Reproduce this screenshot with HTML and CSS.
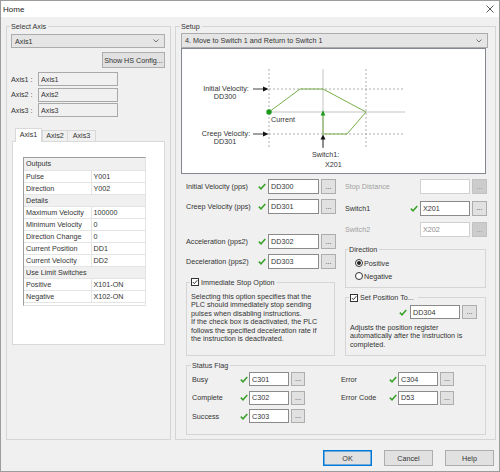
FILE: index.html
```html
<!DOCTYPE html>
<html lang="en">
<head>
    <meta charset="UTF-8">
    <title>Home</title>
    <link rel="stylesheet" href="styles.css">
</head>
<body>
<div class="window">
    <div class="titlebar">
        <span>Home</span>
        <svg class="close" viewBox="0 0 8 8"><path d="M0.5 0.5 L7.5 7.5 M7.5 0.5 L0.5 7.5"/></svg>
    </div>

    <div class="content">
        <div class="groups">
            <!-- left: axis selection -->
            <fieldset class="group axis-group">
                <legend>Select Axis</legend>
                <div class="combo"><span>Axis1</span><svg class="chev" viewBox="0 0 6 4"><path d="M0.5 0.5 L3 3 L5.5 0.5"/></svg></div>
                <button class="btn hs-btn">Show HS Config...</button>
                <div class="axis-list">
                    <div class="axis-row"><span class="axis-lbl">Axis1 :</span><input class="tb ro" value="Axis1" readonly></div>
                    <div class="axis-row"><span class="axis-lbl">Axis2 :</span><input class="tb ro" value="Axis2" readonly></div>
                    <div class="axis-row"><span class="axis-lbl">Axis3 :</span><input class="tb ro" value="Axis3" readonly></div>
                </div>
                <div class="tabs">
                    <span class="tab active">Axis1</span>
                    <span class="tab t2">Axis2</span>
                    <span class="tab t3">Axis3</span>
                </div>
                <div class="tab-page">
                    <div class="grid">
                        <table>
                            <tr class="section"><td colspan="2">Outputs</td></tr>
                            <tr><td class="key">Pulse</td><td>Y001</td></tr>
                            <tr><td class="key">Direction</td><td>Y002</td></tr>
                            <tr class="section"><td colspan="2">Details</td></tr>
                            <tr><td class="key">Maximum Velocity</td><td>100000</td></tr>
                            <tr><td class="key">Minimum Velocity</td><td>0</td></tr>
                            <tr><td class="key">Direction Change</td><td>0</td></tr>
                            <tr><td class="key">Current Position</td><td>DD1</td></tr>
                            <tr><td class="key">Current Velocity</td><td>DD2</td></tr>
                            <tr class="section"><td colspan="2">Use Limit Switches</td></tr>
                            <tr><td class="key">Positive</td><td>X101-ON</td></tr>
                            <tr><td class="key">Negative</td><td>X102-ON</td></tr>
                        </table>
                    </div>
                </div>
            </fieldset>

            <!-- right: setup -->
            <fieldset class="group setup-group">
                <legend>Setup</legend>
                <div class="combo wide"><span>4. Move to Switch 1 and Return to Switch 1</span><svg class="chev" viewBox="0 0 6 4"><path d="M0.5 0.5 L3 3 L5.5 0.5"/></svg></div>

                <div class="diagram">
                    <svg width="303" height="124" viewBox="1 1 303 124">
                        <path class="grid-dash" d="M88 21V99 M185 21V99 M88 41H224 M88 86H224"/>
                        <path class="grid-solid" d="M142 21V99 M88 64H224"/>
                        <path class="arrow-line" d="M72 41H83 M72 86H83 M142 100V90"/>
                        <path class="arrow-head" d="M82 38.5L87.5 41L82 43.5Z M82 83.5L87.5 86L82 88.5Z M139.5 91.5L142 86.5L144.5 91.5Z"/>
                        <path class="profile" d="M88 64L119 41H142L185 64L166 86H142V67"/>
                        <path class="profile-head" d="M139.6 67.5L142 62.3L144.4 67.5Z"/>
                        <circle class="profile-head" cx="88" cy="64" r="2.7"/>
                        <g class="dtext">
                            <text x="45" y="43" text-anchor="middle">Initial Velocity:</text>
                            <text x="44" y="51" text-anchor="middle">DD300</text>
                            <text x="90" y="74">Current</text>
                            <text x="45" y="88" text-anchor="middle">Creep Velocity:</text>
                            <text x="44" y="96" text-anchor="middle">DD301</text>
                            <text x="131" y="108.5">Switch1:</text>
                            <text x="144" y="118.5">X201</text>
                        </g>
                    </svg>
                </div>

                <div class="setup-cols">
                    <div class="col-left">
                        <div class="row">
                            <span class="lbl">Initial Velocity (pps)</span>
                            <svg class="ok" viewBox="0 0 8 7"><path d="M0.8 3.6 L3 5.8 L7.3 0.9"/></svg>
                            <input class="tb" value="DD300">
                            <button class="btn dots">...</button>
                        </div>
                        <div class="row">
                            <span class="lbl">Creep Velocity (pps)</span>
                            <svg class="ok" viewBox="0 0 8 7"><path d="M0.8 3.6 L3 5.8 L7.3 0.9"/></svg>
                            <input class="tb" value="DD301">
                            <button class="btn dots">...</button>
                        </div>
                        <div class="row spaced">
                            <span class="lbl">Acceleration (pps2)</span>
                            <svg class="ok" viewBox="0 0 8 7"><path d="M0.8 3.6 L3 5.8 L7.3 0.9"/></svg>
                            <input class="tb" value="DD302">
                            <button class="btn dots">...</button>
                        </div>
                        <div class="row">
                            <span class="lbl">Deceleration (pps2)</span>
                            <svg class="ok" viewBox="0 0 8 7"><path d="M0.8 3.6 L3 5.8 L7.3 0.9"/></svg>
                            <input class="tb" value="DD303">
                            <button class="btn dots">...</button>
                        </div>

                        <fieldset class="sub stop-opt">
                            <legend><span class="cb"><svg viewBox="0 0 6 6"><path d="M0.8 3 L2.4 4.6 L5.3 1.2"/></svg></span>Immediate Stop Option</legend>
                            <p class="note">Selecting this option specifies that the<br>PLC should immediately stop sending<br>pulses when disabling instructions.<br>If the check box is deactivated, the PLC<br>follows the specified deceleration rate if<br>the instruction is deactivated.</p>
                        </fieldset>
                    </div>

                    <div class="col-right">
                        <div class="row">
                            <span class="lbl off">Stop Distance</span>
                            <span class="no-ok"></span>
                            <input class="tb small off" value="" disabled>
                            <button class="btn dots off">...</button>
                        </div>
                        <div class="row">
                            <span class="lbl">Switch1</span>
                            <svg class="ok" viewBox="0 0 8 7"><path d="M0.8 3.6 L3 5.8 L7.3 0.9"/></svg>
                            <input class="tb small" value="X201">
                            <button class="btn dots">...</button>
                        </div>
                        <div class="row">
                            <span class="lbl off">Switch2</span>
                            <span class="no-ok"></span>
                            <input class="tb small off" value="X202" disabled>
                            <button class="btn dots off">...</button>
                        </div>

                        <fieldset class="sub direction">
                            <legend>Direction</legend>
                            <div class="radio-row first"><span class="radio on"></span>Positive</div>
                            <div class="radio-row"><span class="radio"></span>Negative</div>
                        </fieldset>

                        <fieldset class="sub setpos">
                            <legend><span class="cb"><svg viewBox="0 0 6 6"><path d="M0.8 3 L2.4 4.6 L5.3 1.2"/></svg></span>Set Position To...</legend>
                            <div class="row">
                                <svg class="ok" viewBox="0 0 8 7"><path d="M0.8 3.6 L3 5.8 L7.3 0.9"/></svg>
                                <input class="tb small" value="DD304">
                                <button class="btn dots">...</button>
                            </div>
                            <p class="note">Adjusts the position register<br>automatically after the instruction is<br>completed.</p>
                        </fieldset>
                    </div>
                </div>

                <fieldset class="sub status">
                    <legend>Status Flag</legend>
                    <div class="status-grid">
                        <div class="row">
                            <span class="lbl">Busy</span>
                            <svg class="ok" viewBox="0 0 8 7"><path d="M0.8 3.6 L3 5.8 L7.3 0.9"/></svg>
                            <input class="tb" value="C301">
                            <button class="btn dots">...</button>
                        </div>
                        <div class="row">
                            <span class="lbl">Error</span>
                            <svg class="ok" viewBox="0 0 8 7"><path d="M0.8 3.6 L3 5.8 L7.3 0.9"/></svg>
                            <input class="tb" value="C304">
                            <button class="btn dots">...</button>
                        </div>
                        <div class="row">
                            <span class="lbl">Complete</span>
                            <svg class="ok" viewBox="0 0 8 7"><path d="M0.8 3.6 L3 5.8 L7.3 0.9"/></svg>
                            <input class="tb" value="C302">
                            <button class="btn dots">...</button>
                        </div>
                        <div class="row">
                            <span class="lbl">Error Code</span>
                            <svg class="ok" viewBox="0 0 8 7"><path d="M0.8 3.6 L3 5.8 L7.3 0.9"/></svg>
                            <input class="tb" value="D53">
                            <button class="btn dots">...</button>
                        </div>
                        <div class="row">
                            <span class="lbl">Success</span>
                            <svg class="ok" viewBox="0 0 8 7"><path d="M0.8 3.6 L3 5.8 L7.3 0.9"/></svg>
                            <input class="tb" value="C303">
                            <button class="btn dots">...</button>
                        </div>
                    </div>
                </fieldset>
            </fieldset>
        </div>

        <div class="buttons">
            <button class="btn default">OK</button>
            <button class="btn">Cancel</button>
            <button class="btn">Help</button>
        </div>
    </div>
</div>
</body>
</html>
```

FILE: styles.css
```css
/* Windows style dialog, small scale */
* {
    box-sizing: border-box;
}
html, body {
    margin: 0;
    padding: 0;
}
body {
    font-family: "Liberation Sans", Arial, sans-serif;
    font-size: 7.2px;
    color: #333;
    background: #fff;
}
.window {
    width: 500px;
    height: 472px;
    border: 1px solid #9c9c9c;
    background: #f0f0f0;
}
.titlebar {
    height: 16px;
    background: #fff;
    display: flex;
    align-items: center;
    justify-content: space-between;
    padding: 0 5px 0 2px;
    font-size: 8px;
    color: #222;
}
.close {
    width: 8px;
    height: 8px;
    fill: none;
    stroke: #333;
    stroke-width: 0.8;
}
.content {
    padding: 5px 3px 0 5px;
}
.groups {
    display: flex;
    gap: 4px;
    height: 418px;
}

/* group boxes */
.group, .sub {
    margin: 0;
    border: 1px solid #d5d5d5;
    min-width: 0;
}
.group {
    height: 100%;
}
legend {
    padding: 0 2px 0 1px;
    margin-left: -1px;
    line-height: 9px;
    white-space: nowrap;
}
.axis-group {
    width: 165px;
    padding: 0 5px 0 4px;
}
.setup-group {
    width: 321px;
    padding: 0 7px 0 5px;
}

/* combobox */
.combo {
    height: 14px;
    margin-top: 3px;
    display: flex;
    align-items: center;
    justify-content: space-between;
    padding: 0 5px 0 3px;
    background: #e5e5e5;
    border: 1px solid #acacac;
}
.combo.wide {
    height: 15px;
    margin-top: 2px;
}
.chev {
    width: 6px;
    height: 4px;
    fill: none;
    stroke: #555;
    stroke-width: 0.8;
}

/* buttons and text boxes */
.btn {
    font: inherit;
    color: #333;
    background: #e1e1e1;
    border: 1px solid #adadad;
    padding: 0;
}
.hs-btn {
    display: block;
    width: 63px;
    height: 16px;
    margin: 4px 0 0 auto;
}
.tb {
    font: inherit;
    color: #333;
    width: 51px;
    height: 15px;
    padding: 0 2px;
    margin: 0;
    border: 1px solid #8a8a8a;
    background: #fff;
    outline: none;
}
.tb.ro {
    width: 80px;
    height: 14px;
    background: #f0f0f0;
    border-color: #a9a9a9;
}
.tb.small {
    width: 50px;
}
.tb.off {
    border-color: #d0d0d0;
    color: #8c8c8c;
    background: #fff;
}
.dots {
    width: 15px;
    height: 15px;
    margin-left: 2px;
    flex: none;
    line-height: 10px;
}
.dots.off {
    background: #cccccc;
    border-color: #c2c2c2;
    color: #8f8f8f;
}
.ok {
    width: 8px;
    height: 7px;
    margin-right: 2px;
    flex: none;
    fill: none;
    stroke: #3aa12b;
    stroke-width: 1.5;
}
.no-ok {
    width: 10px;
    flex: none;
}
.cb {
    display: inline-block;
    width: 8px;
    height: 8px;
    border: 1px solid #333;
    background: #fff;
    margin-right: 2px;
    vertical-align: -1.5px;
}
.cb svg {
    display: block;
    width: 6px;
    height: 6px;
    fill: none;
    stroke: #222;
    stroke-width: 0.9;
}

/* axis list */
.axis-list {
    margin-top: 4px;
    display: flex;
    flex-direction: column;
    gap: 1.5px;
}
.axis-row {
    display: flex;
    align-items: center;
}
.axis-lbl {
    width: 27px;
}

/* tabs */
.tabs {
    display: flex;
    align-items: flex-end;
    height: 13px;
    margin: 11px 0 0 4px;
    position: relative;
    z-index: 1;
}
.tab {
    height: 11px;
    line-height: 10px;
    width: 26px;
    text-align: center;
    border: 1px solid #d9d9d9;
    border-bottom: none;
    background: #f0f0f0;
    margin-left: -1px;
}
.tab.active {
    width: 27px;
    height: 14px;
    line-height: 12px;
    margin: 0 0 -1px 0;
    background: #fff;
}
.tab.t2 {
    margin-left: 0;
}
.tab.t3 {
    width: 29px;
}
.tab-page {
    margin-left: 1px;
    width: 153px;
    height: 204px;
    border: 1px solid #d9d9d9;
    background: #fff;
    padding: 15px 0 0 10px;
}
.grid {
    width: 123px;
    height: 149px;
    border: 1px solid #e3e3e3;
    border-top-color: #a0a0a0;
    border-left-color: #a0a0a0;
}
.grid table {
    width: 100%;
    border-collapse: collapse;
}
.grid td {
    height: 12px;
    padding: 0 0 0 2px;
    border-bottom: 1px solid #e4e4e4;
    white-space: nowrap;
}
.grid td.key {
    width: 67px;
    border-right: 1px solid #e4e4e4;
}
.grid tr.section td {
    background: #f0f0f0;
}

/* diagram */
.diagram {
    width: 305px;
    height: 126px;
    border: 1px solid #828790;
    background: #fff;
}
.diagram svg {
    display: block;
}
.grid-dash {
    fill: none;
    stroke: #8e8e8e;
    stroke-width: 0.7;
    stroke-dasharray: 2 2;
}
.grid-solid {
    fill: none;
    stroke: #a9a9a9;
    stroke-width: 0.7;
}
.arrow-line {
    fill: none;
    stroke: #111;
    stroke-width: 0.8;
}
.arrow-head {
    fill: #111;
}
.profile {
    fill: none;
    stroke: #6aa537;
    stroke-width: 0.9;
}
.profile-head {
    fill: #1e9a1e;
}
.dtext {
    font-size: 7.2px;
    fill: #333;
}

/* setup form */
.setup-cols {
    display: flex;
    gap: 8px;
    margin: 5px 0 0 5px;
}
.col-left {
    width: 151px;
}
.col-right {
    width: 143px;
}
.row {
    display: flex;
    align-items: center;
    height: 15px;
}
.lbl {
    flex: none;
    white-space: nowrap;
}
.lbl.off {
    color: #a0a0a0;
}
.col-left .lbl {
    width: 72px;
}
.col-left .row + .row {
    margin-top: 5px;
}
.col-left .row.spaced {
    margin-top: 20px;
}
.col-right .lbl {
    width: 65px;
}
.col-right > .row + .row {
    margin-top: 6.5px;
}
.note {
    margin: 0;
    line-height: 8.6px;
    white-space: nowrap;
}
.stop-opt {
    margin-top: 8.5px;
    width: 149px;
    height: 78.5px;
    padding: 0 0 0 4px;
}
.stop-opt .note {
    margin-top: 6px;
}
.direction {
    margin-top: 7.5px;
    width: 141px;
    height: 43.5px;
    padding: 0 0 0 3px;
}
.radio-row {
    display: flex;
    align-items: center;
    height: 13px;
    margin-left: 6px;
}
.radio-row.first {
    margin-top: 3px;
}
.radio {
    width: 8px;
    height: 8px;
    border: 1px solid #333;
    border-radius: 50%;
    background: #fff;
    margin-right: 1px;
    display: flex;
    align-items: center;
    justify-content: center;
}
.radio.on::after {
    content: "";
    width: 4px;
    height: 4px;
    border-radius: 50%;
    background: #222;
}
.setpos {
    margin-top: 5px;
    width: 141px;
    height: 63px;
    padding: 0 0 0 4px;
}
.setpos legend {
    padding-right: 4px;
}
.setpos .row {
    height: 14px;
    margin: 3px 0 0 49px;
}
.setpos .ok {
    margin-right: 3px;
}
.setpos .tb, .setpos .dots {
    height: 14px;
}
.setpos .note {
    margin-top: 4.5px;
}

/* status flags */
.status {
    margin: 4.5px 0 0 5px;
    width: 300px;
    height: 74.5px;
    padding: 0 0 0 5px;
}
.status-grid {
    display: grid;
    grid-template-columns: 113px 113px;
    column-gap: 36px;
    row-gap: 4.5px;
    margin-top: 2.5px;
}
.status .row {
    height: 14px;
}
.status .lbl {
    width: 48px;
}
.status .ok {
    margin-right: 1px;
}
.status .tb {
    width: 40px;
    height: 14px;
}
.status .dots {
    width: 14px;
    height: 14px;
}

/* dialog buttons */
.buttons {
    display: flex;
    justify-content: flex-end;
    gap: 12px;
    margin-top: 10px;
    padding-right: 2px;
}
.buttons .btn {
    width: 49px;
    height: 16px;
}
.btn.default {
    border-color: #0078d7;
    box-shadow: inset 0 0 0 0.5px #0078d7;
}
```
